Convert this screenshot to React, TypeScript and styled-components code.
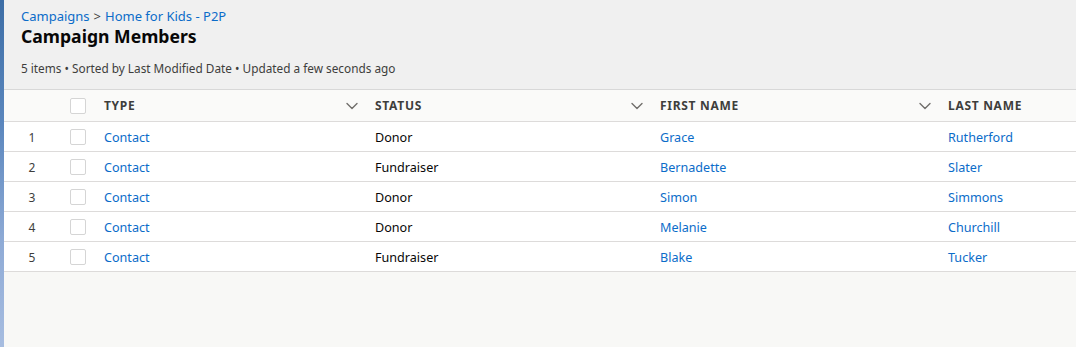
import React from 'react';
import styled, { createGlobalStyle } from 'styled-components';

const GlobalStyle = createGlobalStyle`
    html, body {
        margin: 0;
        padding: 0;
        height: 100%;
    }
    body {
        font-family: 'Noto Sans', 'Open Sans', Arial, sans-serif;
        color: #080707;
        background: #f8f8f6;
    }
    #root {
        height: 100%;
    }
`;

interface Member {
    type: string;
    status: string;
    firstName: string;
    lastName: string;
}

const members: Member[] = [
    { type: 'Contact', status: 'Donor', firstName: 'Grace', lastName: 'Rutherford' },
    { type: 'Contact', status: 'Fundraiser', firstName: 'Bernadette', lastName: 'Slater' },
    { type: 'Contact', status: 'Donor', firstName: 'Simon', lastName: 'Simmons' },
    { type: 'Contact', status: 'Donor', firstName: 'Melanie', lastName: 'Churchill' },
    { type: 'Contact', status: 'Fundraiser', firstName: 'Blake', lastName: 'Tucker' },
];

const columns = [
    { label: 'Type', width: 271, sortable: true },
    { label: 'Status', width: 285, sortable: true },
    { label: 'First Name', width: 288, sortable: true },
    { label: 'Last Name', width: 136, sortable: false },
];

const GRID = `56px 36px ${columns.map((c) => `${c.width}px`).join(' ')}`;

const Shell = styled.div`
    display: flex;
    height: 347px;
    width: 1076px;
    overflow: hidden;
`;

const Backdrop = styled.div`
    width: 4px;
    flex: none;
    background: linear-gradient(180deg, #3d6ea6 0%, #5a86bd 35%, #8fabd6 70%, #a7bde0 100%);
`;

const Panel = styled.div`
    flex: 1;
    display: flex;
    flex-direction: column;
    background: #f8f8f6;
`;

const Header = styled.header`
    background: #f0f0f0;
    border-bottom: 1px solid #d8d8d8;
    padding: 7px 17px 0;
    box-sizing: border-box;
    height: 90px;
`;

const Crumbs = styled.nav`
    font-size: 13px;
    line-height: 18px;
    color: #0b6cc9;
`;

const Separator = styled.span`
    color: #3e3e3c;
    margin: 0 4px;
`;

const Title = styled.h1`
    margin: 0;
    font-size: 17.6px;
    line-height: 23px;
    font-weight: 700;
    color: #080707;
`;

const Meta = styled.p`
    margin: 11px 0 0;
    font-size: 11.8px;
    line-height: 18px;
    color: #3e3e3c;
`;

const Table = styled.div`
    display: flex;
    flex-direction: column;
`;

const Row = styled.div<{ $head?: boolean }>`
    display: grid;
    grid-template-columns: ${GRID};
    align-items: center;
    height: ${({ $head }) => ($head ? '32px' : '30px')};
    box-sizing: border-box;
    padding-top: ${({ $head }) => ($head ? '0' : '1px')};
    background: ${({ $head }) => ($head ? '#fafaf9' : '#ffffff')};
    border-bottom: 1px solid #dddbda;
`;

const RowNumber = styled.div`
    text-align: center;
    font-size: 12px;
    color: #3e3e3c;
`;

const CheckCell = styled.div`
    display: flex;
    justify-content: center;
`;

const Checkbox = styled.span`
    width: 16px;
    height: 16px;
    box-sizing: border-box;
    border: 1px solid #d5d5d5;
    border-radius: 2px;
    background: #fff;
`;

const HeadCell = styled.div`
    display: flex;
    align-items: center;
    justify-content: space-between;
    padding: 0 8px;
    font-size: 12px;
    font-weight: 700;
    letter-spacing: 0.7px;
    text-transform: uppercase;
    color: #3e3e3c;
`;

const Cell = styled.div<{ $link?: boolean }>`
    padding: 0 8px;
    font-size: 12.6px;
    color: ${({ $link }) => ($link ? '#0b6cc9' : '#080707')};
    white-space: nowrap;
`;

const Chevron = () => (
    <svg width="14" height="14" viewBox="0 0 14 14" fill="none">
        <path d="M2 4.5 L7 9.5 L12 4.5" stroke="#706e6b" strokeWidth="1.4" strokeLinecap="round" strokeLinejoin="round" />
    </svg>
);

export default function App() {
    return (
        <>
            <GlobalStyle />
            <Shell>
                <Backdrop />
                <Panel>
                    <Header>
                        <Crumbs>
                            Campaigns<Separator>&gt;</Separator>Home for Kids - P2P
                        </Crumbs>
                        <Title>Campaign Members</Title>
                        <Meta>5 items • Sorted by Last Modified Date • Updated a few seconds ago</Meta>
                    </Header>
                    <Table>
                        <Row $head>
                            <div />
                            <CheckCell>
                                <Checkbox />
                            </CheckCell>
                            {columns.map((c) => (
                                <HeadCell key={c.label}>
                                    <span>{c.label}</span>
                                    {c.sortable && <Chevron />}
                                </HeadCell>
                            ))}
                        </Row>
                        {members.map((m, i) => (
                            <Row key={i}>
                                <RowNumber>{i + 1}</RowNumber>
                                <CheckCell>
                                    <Checkbox />
                                </CheckCell>
                                <Cell $link>{m.type}</Cell>
                                <Cell>{m.status}</Cell>
                                <Cell $link>{m.firstName}</Cell>
                                <Cell $link>{m.lastName}</Cell>
                            </Row>
                        ))}
                    </Table>
                </Panel>
            </Shell>
        </>
    );
}
